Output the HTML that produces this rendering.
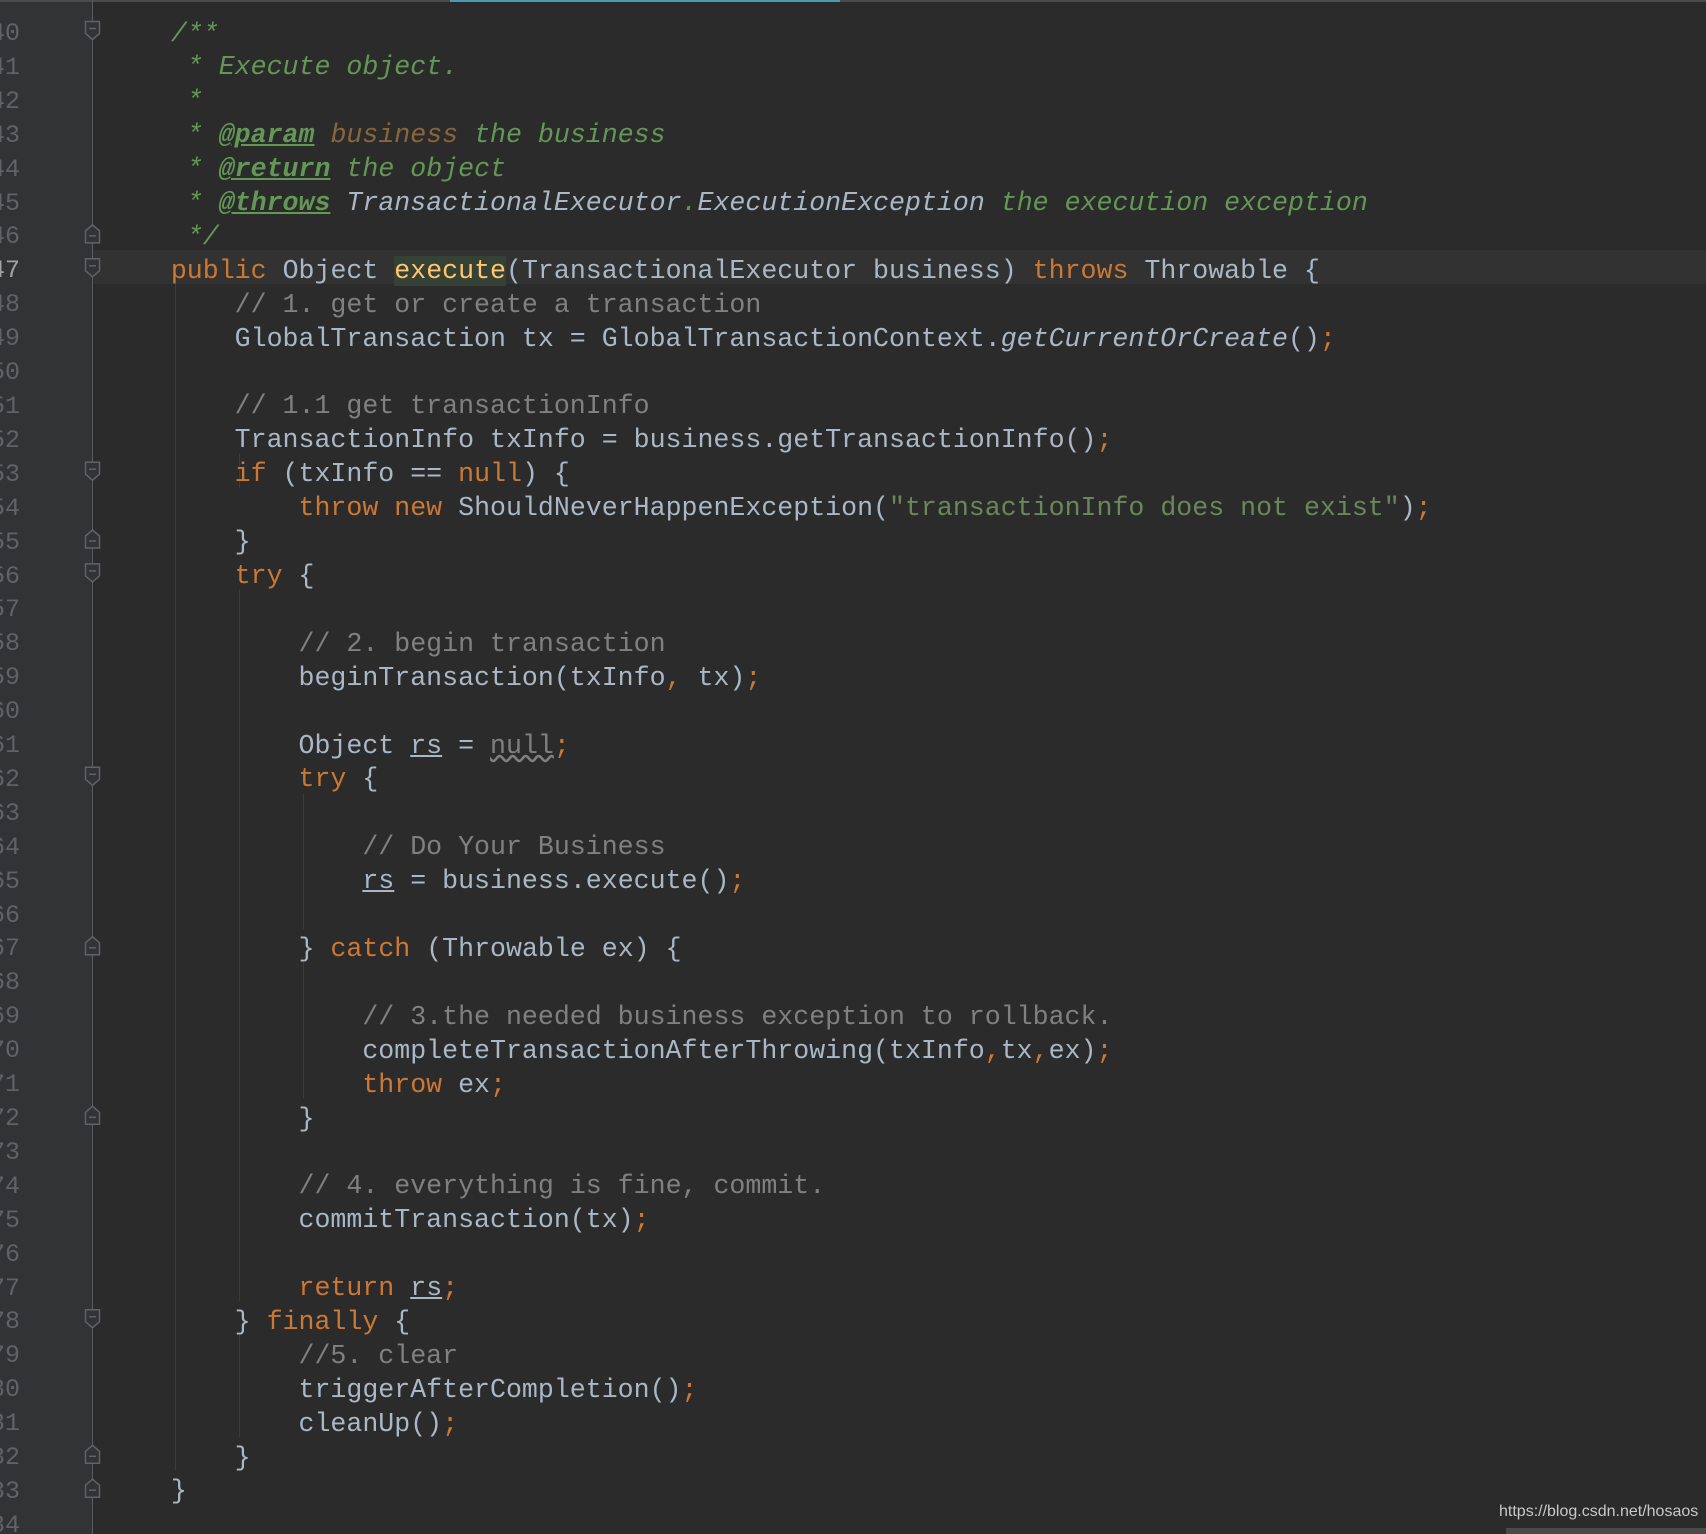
<!DOCTYPE html>
<html><head><meta charset="utf-8"><style>
html,body{margin:0;padding:0;background:#2b2b2b;width:1706px;height:1534px;overflow:hidden;position:relative}
.gut{position:absolute;left:0;top:0;width:92px;height:1534px;background:#313335}
.fl{position:absolute;left:92px;top:0;width:1px;height:1534px;background:#5a5d60}
.top{position:absolute;left:0;top:0;width:1706px;height:2px;background:#4a4a4a}
.topb{position:absolute;left:450px;top:0;width:390px;height:2px;background:#4a9ab0}
.cur{position:absolute;left:93px;top:250px;width:1613px;height:34px;background:#323232}
.g{position:absolute;width:1px;background:#3b3b3b}
.nums{position:absolute;right:1686px;top:17px;font:25px/33.9px "Liberation Mono",monospace;color:#606366;text-align:right;white-space:pre}
.code{position:absolute;left:107px;top:17.5px;font:26.6px/33.9px "Liberation Mono",monospace;color:#a9b7c6;white-space:pre}
.k{color:#cc7832}.c{color:#808080}.d{color:#629755;font-style:italic}
.t{color:#629755;font-style:italic;font-weight:bold;text-decoration:underline}
.p{color:#8a653b;font-style:italic}.dr{color:#a9b7c6;font-style:italic}
.s{color:#6a8759}.i{font-style:italic}.m{color:#ffc66d;background:#344134}
.u{text-decoration:underline}
.n{color:#808080;text-decoration:underline wavy #808080}
.wm{position:absolute;left:1499px;top:1503px;font:16px "Liberation Sans",Arial,sans-serif;color:#c8c8c8}
.bar{position:absolute;left:1506px;top:1528px;width:200px;height:6px;background:#4a4a4a}
</style></head><body>
<div class="gut"></div>
<div class="top"></div><div class="topb"></div>
<div class="cur"></div>
<div class="fl"></div>
<div class="g" style="left:175px;top:284px;height:1187px"></div>
<div class="g" style="left:239px;top:454px;height:34px"></div>
<div class="g" style="left:239px;top:589px;height:712px"></div>
<div class="g" style="left:239px;top:1335px;height:102px"></div>
<div class="g" style="left:303px;top:793px;height:136px"></div>
<div class="g" style="left:303px;top:962px;height:136px"></div>
<div class="nums">40
41
42
43
44
45
46
<span style="color:#a4a3a3">47</span>
48
49
50
51
52
53
54
55
56
57
58
59
60
61
62
63
64
65
66
67
68
69
70
71
72
73
74
75
76
77
78
79
80
81
82
83
84</div>
<svg style="position:absolute;left:0;top:0" width="200" height="1534">
<defs>
<g id="d"><path d="M85.5 -9h14v12l-7 6l-7-6z"/><path d="M89 -2h7"/></g>
<g id="u"><path d="M85.5 9h14v-12l-7-6l-7 6z"/><path d="M89 2h7"/></g>
</defs>
<g fill="#313335" stroke="#606366" stroke-width="1.5">
<use href="#d" y="30.5"/><use href="#d" y="267.8"/><use href="#d" y="471.2"/><use href="#d" y="572.9"/><use href="#d" y="776.3"/><use href="#d" y="1318.7"/>
<use href="#u" y="233.9"/><use href="#u" y="539"/><use href="#u" y="945.8"/><use href="#u" y="1115.3"/><use href="#u" y="1454.3"/><use href="#u" y="1488.2"/>
</g>
</svg>
<div class="code">    <span class="d">/**</span>
<span class="d">     * Execute object.</span>
<span class="d">     *</span>
<span class="d">     * </span><span class="t">@param</span><span class="d"> </span><span class="p">business</span><span class="d"> the business</span>
<span class="d">     * </span><span class="t">@return</span><span class="d"> the object</span>
<span class="d">     * </span><span class="t">@throws</span><span class="d"> </span><span class="dr">TransactionalExecutor</span><span class="d">.</span><span class="dr">ExecutionException</span><span class="d"> the execution exception</span>
<span class="d">     */</span>
    <span class="k">public</span> Object <span class="m">execute</span>(TransactionalExecutor business) <span class="k">throws</span> Throwable {
        <span class="c">// 1. get or create a transaction</span>
        GlobalTransaction tx = GlobalTransactionContext.<span class="i">getCurrentOrCreate</span>()<span class="k">;</span>

        <span class="c">// 1.1 get transactionInfo</span>
        TransactionInfo txInfo = business.getTransactionInfo()<span class="k">;</span>
        <span class="k">if</span> (txInfo == <span class="k">null</span>) {
            <span class="k">throw new</span> ShouldNeverHappenException(<span class="s">"transactionInfo does not exist"</span>)<span class="k">;</span>
        }
        <span class="k">try</span> {

            <span class="c">// 2. begin transaction</span>
            beginTransaction(txInfo<span class="k">,</span> tx)<span class="k">;</span>

            Object <span class="u">rs</span> = <span class="n">null</span><span class="k">;</span>
            <span class="k">try</span> {

                <span class="c">// Do Your Business</span>
                <span class="u">rs</span> = business.execute()<span class="k">;</span>

            } <span class="k">catch</span> (Throwable ex) {

                <span class="c">// 3.the needed business exception to rollback.</span>
                completeTransactionAfterThrowing(txInfo<span class="k">,</span>tx<span class="k">,</span>ex)<span class="k">;</span>
                <span class="k">throw</span> ex<span class="k">;</span>
            }

            <span class="c">// 4. everything is fine, commit.</span>
            commitTransaction(tx)<span class="k">;</span>

            <span class="k">return</span> <span class="u">rs</span><span class="k">;</span>
        } <span class="k">finally</span> {
            <span class="c">//5. clear</span>
            triggerAfterCompletion()<span class="k">;</span>
            cleanUp()<span class="k">;</span>
        }
    }
</div>
<div class="wm">https://blog.csdn.net/hosaos</div>
<div class="bar"></div>
</body></html>
